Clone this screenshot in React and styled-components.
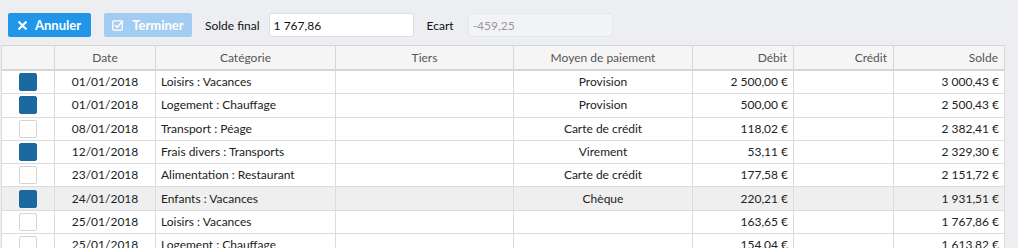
import React from "react";
import styled, { createGlobalStyle } from "styled-components";

const GlobalStyle = createGlobalStyle`
  html, body {
    margin: 0;
    padding: 0;
    background: #eceef2;
    overflow: hidden;
  }
  body {
    font-family: Lato, "Open Sans", sans-serif;
    font-size: 12px;
    color: #222;
  }
`;

const NB = "\u202f";

const rows = [
  { checked: true, date: "01/01/2018", cat: "Loisirs : Vacances", mode: "Provision", debit: `2${NB}500,00${NB}€`, solde: `3${NB}000,43${NB}€` },
  { checked: true, date: "01/01/2018", cat: "Logement : Chauffage", mode: "Provision", debit: `500,00${NB}€`, solde: `2${NB}500,43${NB}€` },
  { checked: false, date: "08/01/2018", cat: "Transport : Péage", mode: "Carte de crédit", debit: `118,02${NB}€`, solde: `2${NB}382,41${NB}€` },
  { checked: true, date: "12/01/2018", cat: "Frais divers : Transports", mode: "Virement", debit: `53,11${NB}€`, solde: `2${NB}329,30${NB}€` },
  { checked: false, date: "23/01/2018", cat: "Alimentation : Restaurant", mode: "Carte de crédit", debit: `177,58${NB}€`, solde: `2${NB}151,72${NB}€` },
  { checked: true, active: true, date: "24/01/2018", cat: "Enfants : Vacances", mode: "Chèque", debit: `220,21${NB}€`, solde: `1${NB}931,51${NB}€` },
  { checked: false, date: "25/01/2018", cat: "Loisirs : Vacances", mode: "", debit: `163,65${NB}€`, solde: `1${NB}767,86${NB}€` },
  { checked: false, date: "25/01/2018", cat: "Logement : Chauffage", mode: "", debit: `154,04${NB}€`, solde: `1${NB}613,82${NB}€` },
];

function App() {
  return (
    <Page>
      <GlobalStyle />
      <Toolbar>
        <Button $w={83}>
          <svg width="9" height="9" viewBox="0 0 9 9">
            <path d="M1.2 1.2 L7.8 7.8 M7.8 1.2 L1.2 7.8" stroke="#fff" strokeWidth="2.2" strokeLinecap="round" />
          </svg>
          Annuler
        </Button>
        <Button $w={88} disabled>
          <svg width="12" height="12" viewBox="0 0 12 12">
            <rect x="0.8" y="1.8" width="9.4" height="9.4" rx="1.2" fill="none" stroke="#fff" strokeWidth="1.3" />
            <path d="M3 6.2 L5.2 8.3 L11 1.8" fill="none" stroke="#fff" strokeWidth="1.6" />
          </svg>
          Terminer
        </Button>
        <Label $gap={9}>Solde final</Label>
        <Input defaultValue="1 767,86" />
        <Label $gap={14}>Ecart</Label>
        <Input value="-459,25" disabled readOnly />
      </Toolbar>
      <Table>
        <colgroup>
          <col style={{ width: 53 }} />
          <col style={{ width: 101 }} />
          <col style={{ width: 180 }} />
          <col style={{ width: 178 }} />
          <col style={{ width: 179 }} />
          <col style={{ width: 101 }} />
          <col style={{ width: 100 }} />
          <col style={{ width: 111 }} />
        </colgroup>
        <thead>
          <tr>
            <Th />
            <Th>Date</Th>
            <Th>Catégorie</Th>
            <Th>Tiers</Th>
            <Th>Moyen de paiement</Th>
            <Th $align="right">Débit</Th>
            <Th $align="right">Crédit</Th>
            <Th $align="right">Solde</Th>
          </tr>
        </thead>
        <tbody>
          {rows.map((r, i) => (
            <Tr key={i} $active={r.active}>
              <Td $align="center"><Check $checked={r.checked} /></Td>
              <Td $align="center">{r.date}</Td>
              <Td>{r.cat}</Td>
              <Td />
              <Td $align="center">{r.mode}</Td>
              <Td $align="right">{r.debit}</Td>
              <Td $align="right" />
              <Td $align="right">{r.solde}</Td>
            </Tr>
          ))}
        </tbody>
      </Table>
    </Page>
  );
}
export default App;

const Page = styled.div`
  width: 1018px;
  height: 248px;
  overflow: hidden;
`;

const Toolbar = styled.div`
  display: flex;
  align-items: center;
  height: 24px;
  padding: 13px 0 8px 8px;
`;

const Button = styled.button`
  display: flex;
  align-items: center;
  justify-content: center;
  gap: 8px;
  width: ${(p) => p.$w}px;
  height: 24px;
  padding: 0;
  margin-right: 13px;
  border: none;
  border-radius: 2px;
  background: ${(p) => (p.disabled ? "#a2cdf1" : "#2196e9")};
  color: #fff;
  font-family: Lato, sans-serif;
  font-weight: 700;
  font-size: 13px;
`;

const Label = styled.span`
  margin-right: ${(p) => p.$gap}px;
  font-size: 12px;
  color: #111;
`;

const Input = styled.input`
  box-sizing: border-box;
  width: 145px;
  height: 24px;
  padding: 0 4px;
  margin-right: 13px;
  border: 1px solid ${(p) => (p.disabled ? "#e3e6ea" : "#dcdfe3")};
  border-radius: 3px;
  background: ${(p) => (p.disabled ? "#f2f3f6" : "#fff")};
  color: ${(p) => (p.disabled ? "#999" : "#111")};
  font-family: Lato, sans-serif;
  font-size: 12px;
  outline: none;
`;

const Table = styled.table`
  margin-left: 1px;
  width: 1003px;
  table-layout: fixed;
  border-collapse: collapse;
  background: #fff;
`;

const Th = styled.th`
  height: 23px;
  padding: 0 6px;
  background: #f5f5f5;
  border: 1px solid #d6d6d6;
  border-bottom: 2px solid #d6d6d6;
  color: #555;
  font-weight: 400;
  text-align: ${(p) => p.$align || "center"};
  white-space: nowrap;
`;

const Tr = styled.tr`
  background: ${(p) => (p.$active ? "#efefef" : "#fff")};
`;

const Td = styled.td`
  height: 22.3px;
  padding: 0 5px;
  border: 1px solid #dcdcdc;
  text-align: ${(p) => p.$align || "left"};
  white-space: nowrap;
  vertical-align: middle;
  line-height: 14px;
`;

const Check = styled.span`
  display: inline-block;
  box-sizing: border-box;
  width: 18px;
  height: 18px;
  vertical-align: middle;
  border-radius: 2px;
  background: ${(p) => (p.$checked ? "#1a69a1" : "#fff")};
  border: 1px solid ${(p) => (p.$checked ? "#1a69a1" : "#d4d4d4")};
`;
